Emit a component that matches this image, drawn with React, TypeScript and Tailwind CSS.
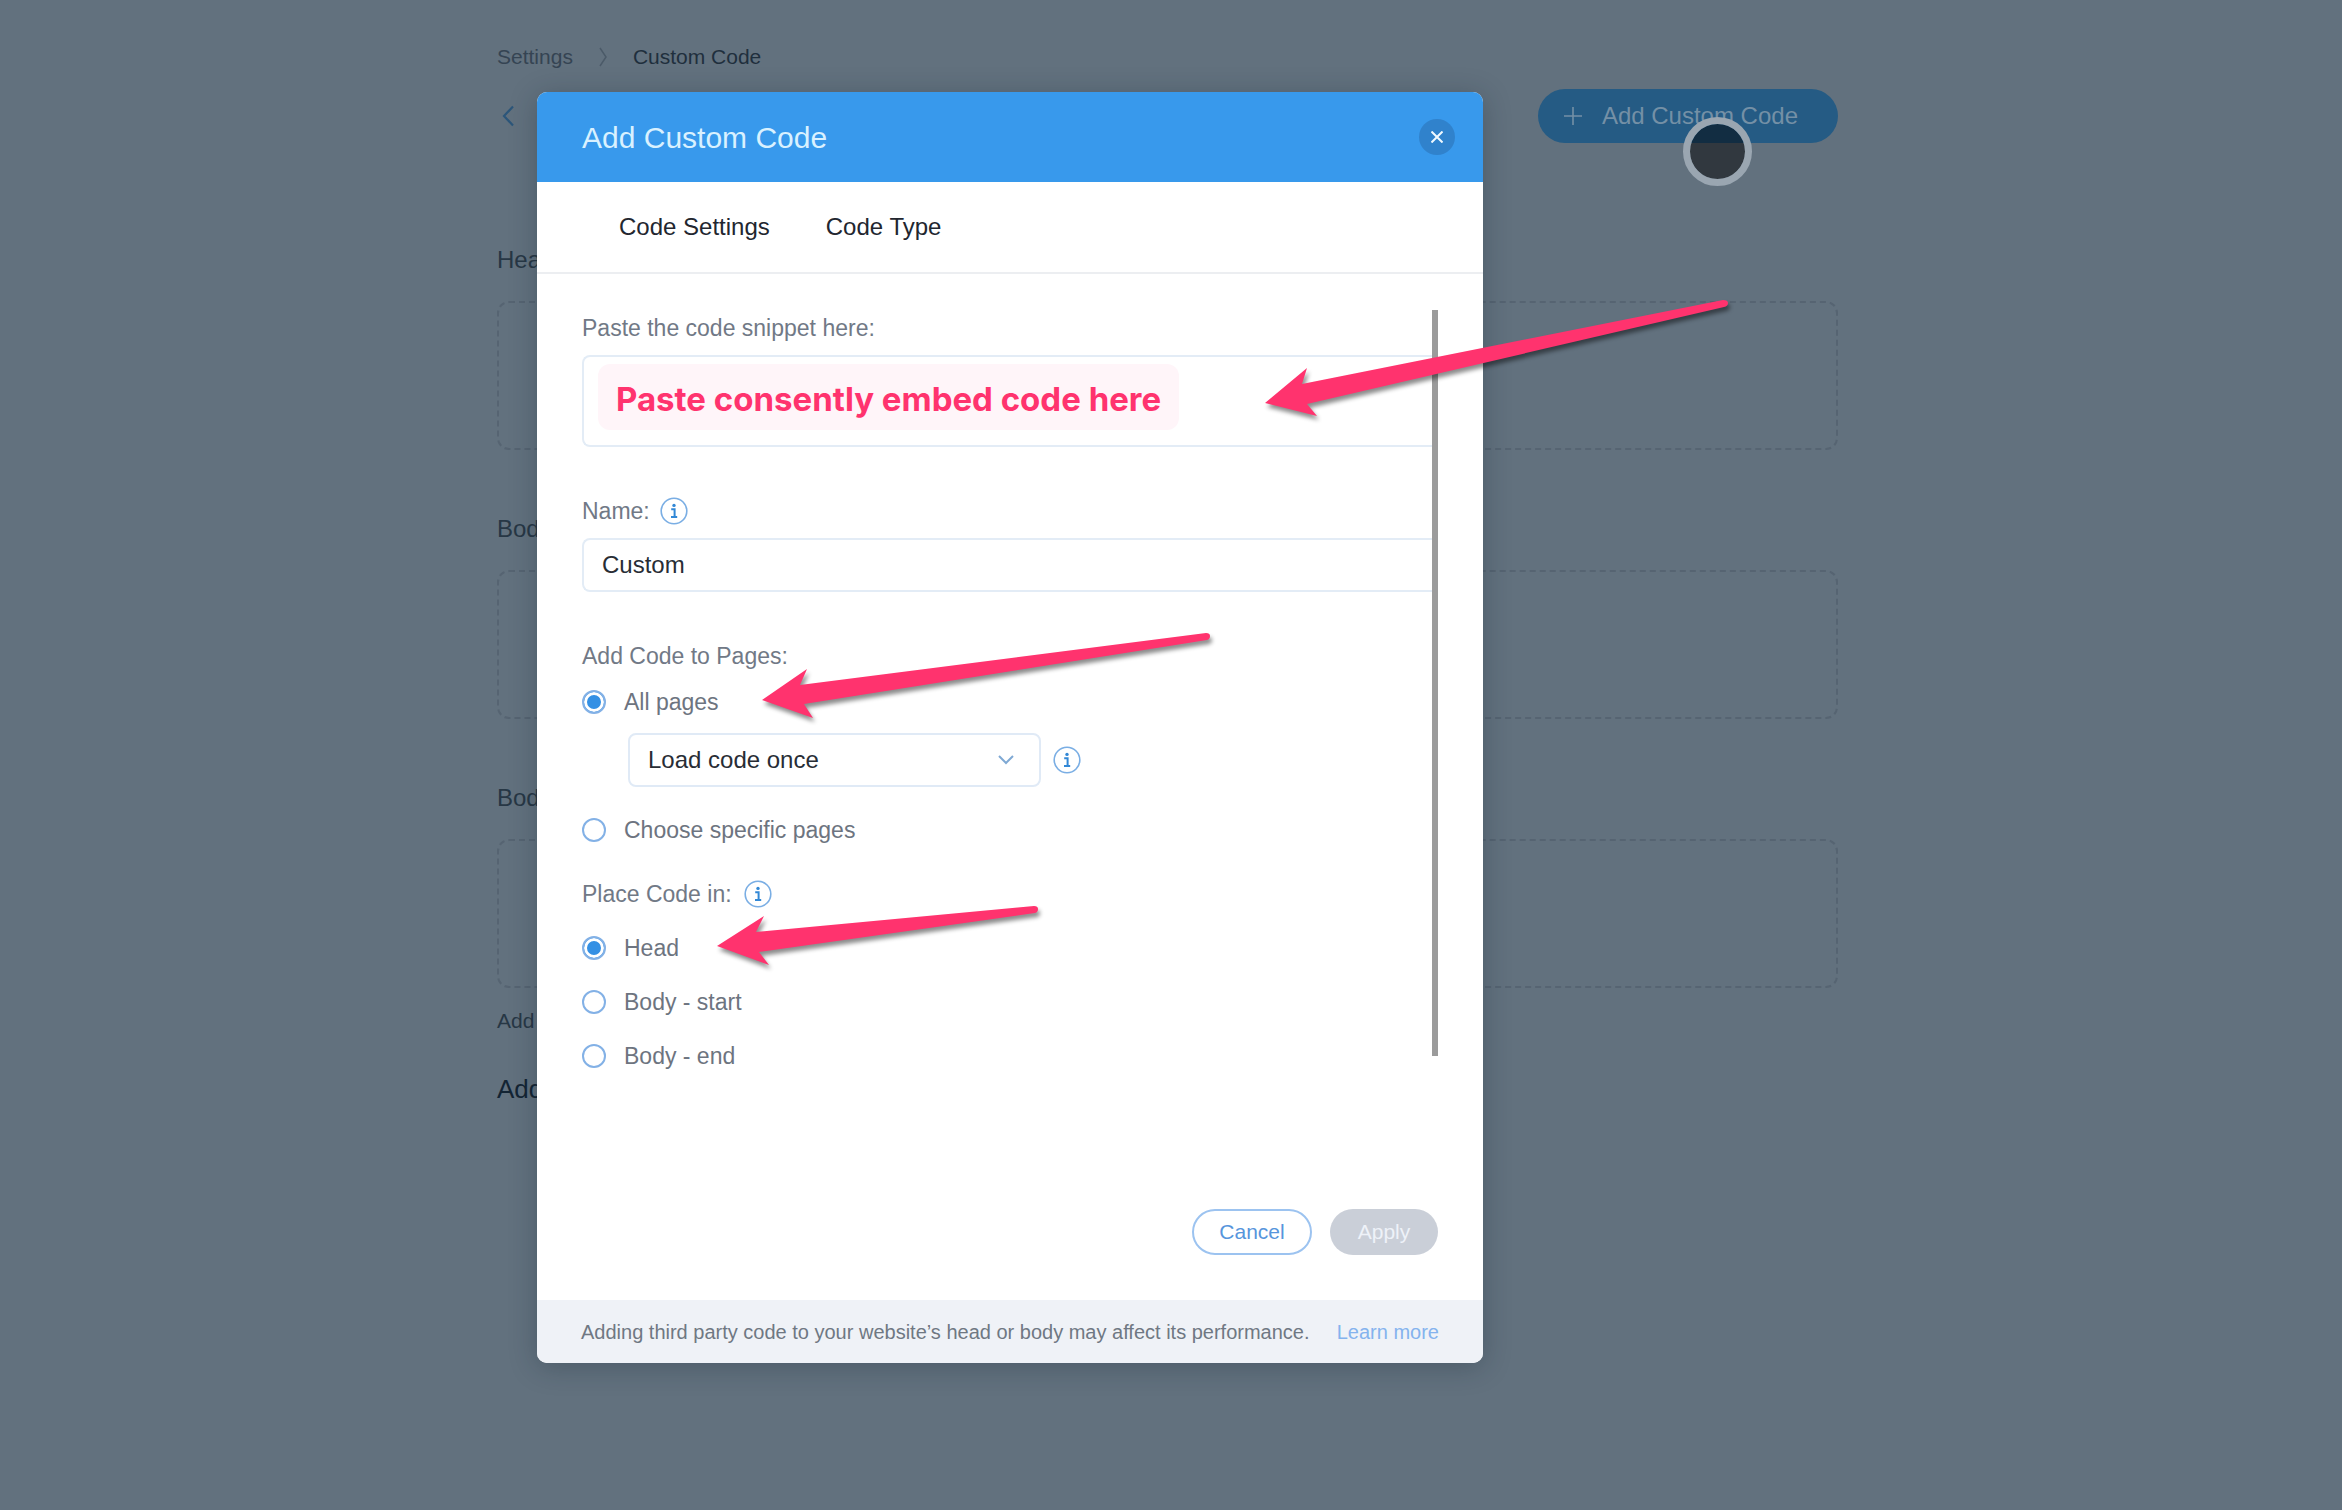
import React, { useState } from 'react';

const sections = [
  { id: 'head', title: 'Head' },
  { id: 'body-start', title: 'Body' },
  { id: 'body-end', title: 'Body' },
];

const placements = [
  { id: 'head', text: 'Head' },
  { id: 'body-start', text: 'Body - start' },
  { id: 'body-end', text: 'Body - end' },
];

// Pointer arrows, drawn in the dialog's own coordinates
const arrows = [
  'M728 311 L770 276 L765 292 L1186 208 Q1191 208 1191 211 Q1191 214 1187 215 L770 312 L780 324 Z',
  'M225 608 L270 577 L263 593 L669 541 Q673 541 673 544 Q673 547 670 548 L267 612 L276 626 Z',
  'M180 854 L227 824 L219 840 L497 814 Q501 814 501 817 Q501 820 498 821 L222 860 L232 873 Z',
];

const InfoIcon: React.FC = () => (
  <svg className="size-7 shrink-0" viewBox="0 0 28 28" fill="none" aria-hidden="true">
    <circle cx="14" cy="14" r="12.8" stroke="#7aaee4" strokeWidth="1.6" />
    <circle cx="14" cy="8.4" r="1.7" fill="#3288d6" />
    <path d="M11.2 12.2h3.4v7.6M11 20h6.2" stroke="#3288d6" strokeWidth="2" />
  </svg>
);

const Radio: React.FC<{
  name: string;
  text: string;
  checked: boolean;
  onChange: () => void;
}> = ({ name, text, checked, onChange }) => (
  <label className="flex h-9 w-fit items-center gap-[18px] text-[23px] text-[#6d7480]">
    <input
      type="radio"
      name={name}
      checked={checked}
      onChange={onChange}
      className="size-6 appearance-none rounded-full border-2 border-[#83b1e6] bg-white checked:bg-[#3490e4] checked:shadow-[inset_0_0_0_3px_white]"
    />
    {text}
  </label>
);

const Page: React.FC = () => (
  <main className="mx-auto w-full max-w-[1341px] pt-[42px] text-[#273745]">
    <nav className="flex h-[30px] items-center text-[21px]">
      <a href="#settings" className="text-[#354453]">Settings</a>
      <svg className="mx-6 h-5 w-3" viewBox="0 0 12 20" fill="none" stroke="#4b5a68" strokeWidth="1.5">
        <path d="M3 1l6 9-6 9" />
      </svg>
      <span className="text-[#1f2f3d]">Custom Code</span>
    </nav>

    <div className="mt-[17px] flex items-center justify-between">
      <button aria-label="Back" className="pl-1">
        <svg className="h-[22px] w-4" viewBox="0 0 16 22" fill="none" stroke="#2c567a" strokeWidth="2.2">
          <path d="M12 1.500L3 11l9 9.500" />
        </svg>
      </button>
      <button className="flex h-[54px] items-center gap-5 rounded-full bg-[#255b84] pr-10 pl-[26px] text-2xl text-[#7490a6]">
        <svg className="size-[18px]" viewBox="0 0 18 18" fill="none" stroke="currentColor" strokeWidth="1.6">
          <path d="M9 0v18M0 9h18" />
        </svg>
        Add Custom Code
      </button>
    </div>

    <div className="mt-[102px] flex flex-col gap-16">
      {sections.map((section) => (
        <section key={section.id}>
          <h2 className="text-2xl leading-[30px]">{section.title}</h2>
          <div className="mt-[26px] h-[149px] rounded-xl border-2 border-dashed border-[#566472]"></div>
        </section>
      ))}
    </div>

    <p className="mt-[18px] text-[21px] leading-[30px]">Add</p>
    <p className="mt-[38px] text-[26px] leading-[30px] text-[#132433]">Add</p>
  </main>
);

const Dialog: React.FC = () => {
  const [scope, setScope] = useState('all');
  const [place, setPlace] = useState('head');
  const [name, setName] = useState('Custom');

  return (
    <div
      role="dialog"
      aria-labelledby="dialog-title"
      className="relative h-fit w-full max-w-[946px] rounded-[10px] bg-white shadow-[0_4px_28px_rgba(20,35,50,0.3)]"
    >
      <header className="flex h-[90px] items-center justify-between rounded-t-[10px] bg-[#3899ec] pr-7 pl-[45px]">
        <h1 id="dialog-title" className="text-[30px] text-[#d9f1ff]">Add Custom Code</h1>
        <button aria-label="Close" className="flex size-9 items-center justify-center rounded-full bg-[#3082cc]">
          <svg className="size-3" viewBox="0 0 12 12" fill="none" stroke="#f0f9ff" strokeWidth="2">
            <path d="M0.500 0.500l11 11M11.500 0.500l-11 11" />
          </svg>
        </button>
      </header>

      <div className="flex h-[92px] items-center gap-14 border-b-2 border-[#eceef1] pl-[82px] text-2xl text-[#22262f]">
        <button>Code Settings</button>
        <button>Code Type</button>
      </div>

      <div className="flex px-[45px] pt-9">
        <form className="min-w-0 flex-1 text-[23px] text-[#717986]">
          <label htmlFor="snippet" className="block leading-9">Paste the code snippet here:</label>
          <div className="relative mt-[9px]">
            <textarea
              id="snippet"
              className="block h-[92px] w-full resize-none rounded-l-lg border-2 border-r-0 border-[#e3ecf6] bg-white"
            />
            <div className="absolute top-[9px] left-4 flex h-[66px] items-center rounded-xl bg-[#fff5f9] px-[18px] pt-[6px] font-['Inter'] text-[33px] font-bold whitespace-nowrap text-[#ff336e]">
              Paste consently embed code here
            </div>
          </div>

          <div className="mt-[46px] flex h-9 items-center gap-[10px]">
            <label htmlFor="code-name">Name:</label>
            <InfoIcon />
          </div>
          <input
            id="code-name"
            type="text"
            value={name}
            onChange={(e) => setName(e.target.value)}
            className="mt-[9px] block h-[54px] w-full rounded-l-lg border-2 border-r-0 border-[#e3ecf6] px-[18px] text-2xl text-[#282d35]"
          />

          <fieldset className="mt-[46px]">
            <legend className="leading-9">Add Code to Pages:</legend>
            <div className="mt-[10px]">
              <Radio name="scope" text="All pages" checked={scope === 'all'} onChange={() => setScope('all')} />
            </div>
            <div className="mt-[13px] ml-[46px] flex items-center gap-3">
              <div className="relative w-[413px]">
                <select
                  aria-label="Load frequency"
                  className="block h-[54px] w-full appearance-none rounded-lg border-2 border-[#e0eaf6] bg-white px-[18px] text-2xl text-[#282d35]"
                >
                  <option>Load code once</option>
                </select>
                <svg
                  className="pointer-events-none absolute top-[22px] right-[27px] h-[10px] w-4"
                  viewBox="0 0 16 10"
                  fill="none"
                  stroke="#7fa9d4"
                  strokeWidth="2"
                >
                  <path d="M1 1l7 7 7-7" />
                </svg>
              </div>
              <InfoIcon />
            </div>
            <div className="mt-[25px]">
              <Radio
                name="scope"
                text="Choose specific pages"
                checked={scope === 'specific'}
                onChange={() => setScope('specific')}
              />
            </div>
          </fieldset>

          <fieldset className="mt-7">
            <legend className="flex h-9 items-center gap-3">
              Place Code in:
              <InfoIcon />
            </legend>
            <div className="mt-[18px] flex flex-col gap-[18px]">
              {placements.map((p) => (
                <Radio
                  key={p.id}
                  name="place"
                  text={p.text}
                  checked={place === p.id}
                  onChange={() => setPlace(p.id)}
                />
              ))}
            </div>
          </fieldset>
        </form>
        <div className="h-[746px] w-[6px] bg-[#9b9b9b]"></div>
      </div>

      <div className="mt-[135px] flex justify-end gap-[18px] px-[45px] pb-[45px] text-[21px]">
        <button className="h-[46px] w-[120px] rounded-full border-2 border-[#9cc3f0] text-[#5795dc]">Cancel</button>
        <button className="h-[46px] w-[108px] rounded-full bg-[#cacfd8] text-[#eef2f8]">Apply</button>
      </div>

      <footer className="flex h-[63px] items-center justify-between rounded-b-[10px] bg-[#eff2f7] px-11 text-xl whitespace-nowrap text-[#6f7883]">
        <p>Adding third party code to your website’s head or body may affect its performance.</p>
        <a href="#learn-more" className="text-[#84b3ee]">Learn more</a>
      </footer>

      <svg
        className="pointer-events-none absolute top-0 left-0 h-full w-full overflow-visible drop-shadow-[2px_4px_2px_rgba(0,0,0,0.45)]"
        fill="#ff336e"
        aria-hidden="true"
      >
        {arrows.map((d) => (
          <path key={d} d={d} />
        ))}
      </svg>
    </div>
  );
};

export default function App() {
  return (
    <div className="relative min-h-screen bg-[#62717e] pr-[7px] font-['Liberation_Sans',Arial,sans-serif]">
      <Page />
      {/* Mouse cursor ring over the add button */}
      <div className="absolute top-[117px] left-[1683px] size-[69px] rounded-full border-[7px] border-[#9aa6b1] bg-black/50 bg-clip-padding"></div>
      <div className="absolute inset-0 flex justify-center pt-[92px] pr-[322px]">
        <Dialog />
      </div>
    </div>
  );
}
